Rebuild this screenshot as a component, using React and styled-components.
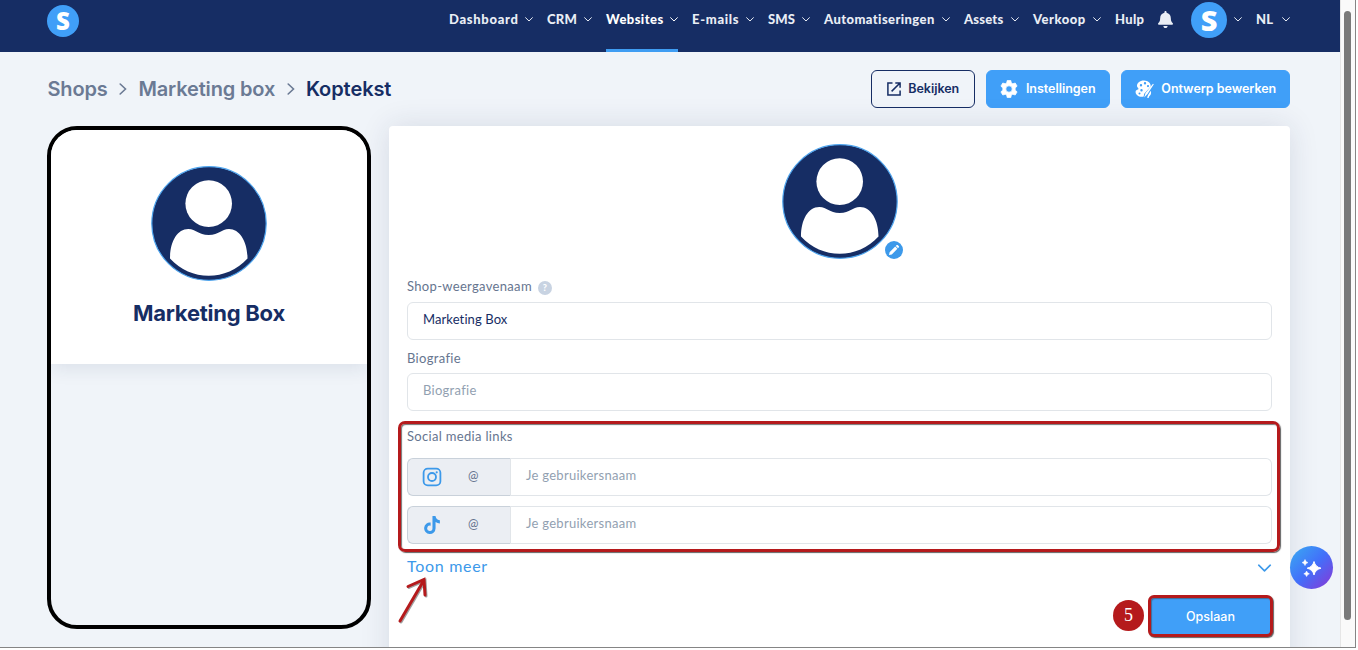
import React from "react";

// COMPONENTS
import styled, { createGlobalStyle } from "styled-components";

// ICONS
import { FaBell, FaTiktok } from "react-icons/fa";

const navItems = [
    { label: "Dashboard", width: 84, tracking: 0.7 },
    { label: "CRM", width: 45, tracking: 0.3 },
    { label: "Websites", width: 72, tracking: 0.45, active: true },
    { label: "E-mails", width: 62, tracking: 0.7 },
    { label: "SMS", width: 42, tracking: 0.1 },
    { label: "Automatiseringen", width: 126, tracking: 0.42 },
    { label: "Assets", width: 55, tracking: 0.2 },
    { label: "Verkoop", width: 68, tracking: 0.5 },
];

const Chevron = ({ size = 8, weight = 1 }) => (
    <svg width={size} height={size / 2 + 1} viewBox="0 0 8 5" fill="none">
        <path d="M.6.7 4 4 7.4.7" stroke="currentColor" strokeWidth={weight} strokeLinecap="round" strokeLinejoin="round" />
    </svg>
);

const CrumbArrow = () => (
    <svg width="8" height="12" viewBox="0 0 8 12" fill="none">
        <path d="M1.2 1 6.5 6 1.2 11" stroke="#6b7a94" strokeWidth="1.6" strokeLinecap="round" />
    </svg>
);

const Person = () => (
    <svg width="116" height="115" viewBox="0 0 116 115">
        <ellipse cx="58" cy="57.5" rx="57.2" ry="56.8" fill="#162d64" stroke="#4fa5ee" strokeWidth="1.2" />
        <circle cx="57.7" cy="37.6" r="23.3" fill="#fff" />
        <path
            d="M19 92.5C19 76 26 63 37.3 63c8 0 9.7 6 20.4 6S70 63 78 63c11 0 18.5 13 18.5 29.5C86 104 72 109.7 57.7 109.7S29.500 104 19 92.500Z"
            fill="#fff"
        />
    </svg>
);

const App = () => {
    return (
        <Page>
            <GlobalStyle />
            <Main>
                <Nav>
                    <Logo>S</Logo>
                    <Menu>
                        {navItems.map((item) => (
                            <NavItem key={item.label} $width={item.width} $tracking={item.tracking} $active={item.active}>
                                {item.label}
                                <Chevron />
                            </NavItem>
                        ))}
                        <NavItem $width={29} $tracking={0.3}>Hulp</NavItem>
                        <Bell><FaBell size={17} /></Bell>
                        <Profile>
                            <Logo $large>S</Logo>
                            <Chevron />
                        </Profile>
                        <NavItem $width={34} $tracking={0.3}>NL <Chevron /></NavItem>
                    </Menu>
                </Nav>

                <Header>
                    <Crumbs>
                        <span>Shops</span>
                        <CrumbArrow />
                        <span>Marketing box</span>
                        <CrumbArrow />
                        <Current>Koptekst</Current>
                    </Crumbs>
                    <Actions>
                        <Button $outline $width={104}>
                            <svg width="14" height="14" viewBox="0 0 14 14" fill="none" stroke="#162d64" strokeWidth="1.5">
                                <path d="M5.500.9H.9v12.200h12.200V8.500M8.300.9h4.800v4.800M13 1 4.600 9.400" />
                            </svg>
                            Bekijken
                        </Button>
                        <Button $width={124}>
                            <svg width="18" height="18" viewBox="0 0 24 24" fill="#fff">
                                <path
                                    fillRule="evenodd"
                                    d="M9.600 0.600h4.800l.7 3.300 2 1.100 3.200-1 2.500 4.200-2.600 2.300v3l2.600 2.300-2.500 4.200-3.200-1-2 1.100-.7 3.300H9.600l-.7-3.300-2-1.100-3.200 1-2.500-4.200 2.600-2.300v-3L1.200 8.200 3.700 4l3.200 1 2-1.100ZM12 7.700a4.300 4.300 0 1 0 0 8.600 4.300 4.300 0 0 0 0-8.600Z"
                                    stroke="#fff"
                                    strokeWidth="1"
                                    strokeLinejoin="round"
                                />
                            </svg>
                            Instellingen
                        </Button>
                        <Button $width={169}>
                            <Palette />
                            Ontwerp bewerken
                        </Button>
                    </Actions>
                </Header>

                <Content>
                    <Phone>
                        <PhoneTop>
                            <Person />
                            <ShopName>Marketing Box</ShopName>
                        </PhoneTop>
                    </Phone>

                    <Panel>
                        <Picture>
                            <Person />
                            <EditBadge>
                                <svg width="12" height="12" viewBox="0 0 12 12" fill="#fff">
                                    <path d="M1 11l.6-2.800 5.600-5.600 2.200 2.200-5.600 5.600ZM7.800 2l.9-.9q.5-.4 1 0l1.200 1.200q.4.5 0 1l-.9.9Z" />
                                </svg>
                            </EditBadge>
                        </Picture>

                        <Label>
                            Shop-weergavenaam <Help>?</Help>
                        </Label>
                        <Field $filled>Marketing Box</Field>

                        <Label $second>Biografie</Label>
                        <Field>Biografie</Field>

                        <Social>
                            <Highlight />
                            <Label $social>Social media links</Label>
                            <SocialRow>
                                <Prefix>
                                    <svg width="20" height="20" viewBox="0 0 20 20" fill="none" stroke="#3c99ea" strokeWidth="1.800">
                                        <rect x="1.600" y="1.600" width="16.800" height="16.800" rx="4.200" />
                                        <circle cx="10" cy="10" r="4" />
                                        <circle cx="14.700" cy="5.300" r="1.100" fill="#3c99ea" stroke="none" />
                                    </svg>
                                    <span>@</span>
                                </Prefix>
                                <Username>Je gebruikersnaam</Username>
                            </SocialRow>
                            <SocialRow>
                                <Prefix>
                                    <FaTiktok size={18} />
                                    <span>@</span>
                                </Prefix>
                                <Username>Je gebruikersnaam</Username>
                            </SocialRow>
                        </Social>

                        <More>
                            Toon meer
                            <MoreChevron>
                                <Chevron size={15} weight={0.95} />
                            </MoreChevron>
                            <Pointer />
                        </More>

                        <Footer>
                            <Step>5</Step>
                            <Save>Opslaan</Save>
                        </Footer>
                    </Panel>
                </Content>

                <Assistant>
                    <svg width="22" height="20" viewBox="0 0 22 20" fill="#fff">
                        <path d="M13 3.500Q14.300 9 20 10.200 14.300 11.500 13 17 11.700 11.500 6.200 10.200 11.700 9 13 3.500Z" stroke="#fff" strokeLinejoin="round" />
                        <path
                            d="M4 1.500Q4.700 4 7 4.600 4.700 5.200 4 7.600 3.300 5.200 1 4.600 3.300 4 4 1.500ZM5.600 13Q6.200 15.200 8.400 15.800 6.200 16.400 5.600 18.600 5 16.400 2.800 15.800 5 15.200 5.600 13Z"
                            stroke="#fff"
                            strokeWidth=".5"
                        />
                    </svg>
                </Assistant>
            </Main>
            <Scrollbar>
                <Thumb />
            </Scrollbar>
        </Page>
    );
};

const Palette = () => (
    <svg width="19" height="19" viewBox="0 0 19 19" fill="#fff">
        <path
            fillRule="evenodd"
            d="M9.300.5C5 .3 1.800 3 2 6.200c.1 1.300 1.800 1.500 1.400 2.800C3 10.300.8 9.600.6 11.800c-.3 3.300 3.700 5.700 7.600 4.900 1.200-.3.300-2.200 1.200-3.200L15.800 6.500C15.800 3 13 .6 9.300.5ZM6 4a1.200 1.200 0 1 1 0 2.400A1.200 1.200 0 0 1 6 4Zm4-1.900a1.200 1.200 0 1 1 0 2.400 1.200 1.200 0 0 1 0-2.400Zm3 2.900a1.100 1.100 0 1 1 0 2.200A1.100 1.100 0 0 1 13 5ZM6.500 9a1.200 1.200 0 1 1 0 2.400 1.200 1.200 0 0 1 0-2.400ZM4.500 12.400a1 1 0 1 1 0 2 1 1 0 0 1 0-2Z"
        />
        <path d="M18 3.800 10.500 13l-1.300 4.500L12.500 14 18.800 4.300ZM13.500 14.200l2.300-3.400c.7 2.200.1 4.400-1.200 5.200-.8.500-.8 1.200-.9 2h-1.400c0-1.400.5-2.300 1.200-3.800Z" />
    </svg>
);

const Pointer = () => (
    <Arrow width="34" height="50" viewBox="0 0 34 50" fill="none">
        <g strokeLinecap="round" strokeWidth="3">
            <path d="M4 46 28 5M12 11.500 28 4.500 29 20" stroke="#777" strokeOpacity=".7" />
            <path d="M3 45 27 4M11 10.500 27 3.500 28 19" stroke="#b51a1c" />
        </g>
    </Arrow>
);

export default App;

const GlobalStyle = createGlobalStyle`
    * {
        box-sizing: border-box;
    }

    body {
        margin: 0;
        overflow: hidden;
        background: #fff;
        font-family: Lato, sans-serif;
    }

    svg {
        display: block;
        flex-shrink: 0;
    }
`;

const Page = styled.div`
    display: flex;
    width: 1356px;
    height: 648px;
    overflow: hidden;
    border-right: 1px solid #858585;
    border-bottom: 1px solid #858585;
`;

const Main = styled.main`
    position: relative;
    width: 1340px;
    height: 647px;
    overflow: hidden;
    background: #f0f4f9;
`;

const Nav = styled.nav`
    display: flex;
    justify-content: space-between;
    height: 52px;
    padding: 0 50px 0 47px;
    background: #162d64;
`;

const Logo = styled.div`
    display: flex;
    align-items: center;
    justify-content: center;
    width: ${(props) => (props.$large ? 36 : 32)}px;
    height: ${(props) => (props.$large ? 36 : 32)}px;
    margin-top: ${(props) => (props.$large ? 2 : 5)}px;
    padding-bottom: ${(props) => (props.$large ? 2 : 0)}px;
    border-radius: 50%;
    background: #409ff8;
    color: #fff;
    font-family: "Open Sans", sans-serif;
    font-size: ${(props) => (props.$large ? 29 : 24)}px;
    font-weight: 800;
    line-height: 1;
`;

const Menu = styled.div`
    display: flex;
    gap: 14px;
`;

const NavItem = styled.div`
    display: flex;
    justify-content: space-between;
    align-items: center;
    width: ${(props) => props.$width}px;
    height: 52px;
    padding-bottom: 12px;
    border-bottom: 3px solid ${(props) => (props.$active ? "#3f9df3" : "transparent")};
    color: ${(props) => (props.$active ? "#fff" : "#e9edf5")};
    font-size: 13px;
    font-weight: 900;
    letter-spacing: ${(props) => props.$tracking}px;
    white-space: nowrap;

    svg {
        margin-top: 2px;
    }
`;

const Bell = styled.div`
    width: 16px;
    margin: 11px 4px 0 -1px;
    color: #e9edf5;
`;

const Profile = styled.div`
    display: flex;
    gap: 7px;
    height: 38px;
    color: #e9edf5;

    > svg {
        margin-top: 17px;
    }
`;

const Header = styled.header`
    display: flex;
    justify-content: space-between;
    align-items: center;
    height: 74px;
    padding: 0 50px 0 47.5px;
`;

const Crumbs = styled.div`
    display: flex;
    align-items: center;
    gap: 11.4px;
    color: #6b7a94;
    font-family: Inter, sans-serif;
    font-size: 20px;
    font-weight: 600;
    letter-spacing: -0.15px;
`;

const Current = styled.span`
    color: #162d64;
    letter-spacing: -0.08px;
`;

const Actions = styled.div`
    display: flex;
    gap: 11px;
`;

const Button = styled.div`
    display: flex;
    align-items: center;
    justify-content: center;
    gap: 7.5px;
    width: ${(props) => props.$width}px;
    height: 38px;
    padding-bottom: 1px;
    border: 1px solid ${(props) => (props.$outline ? "#162d64" : "#409ff8")};
    border-radius: 6px;
    background: ${(props) => (props.$outline ? "transparent" : "#409ff8")};
    color: ${(props) => (props.$outline ? "#162d64" : "#fff")};
    font-family: Inter, sans-serif;
    font-size: 12.5px;
    font-weight: 600;
    letter-spacing: -0.03px;
    white-space: nowrap;

    svg {
        margin-top: 1px;
    }
`;

const Content = styled.div`
    display: flex;
    align-items: flex-start;
    gap: 18px;
    padding-left: 47px;
`;

const Phone = styled.div`
    width: 324px;
    height: 503px;
    overflow: hidden;
    border: 4px solid #000;
    border-radius: 30px;
`;

const PhoneTop = styled.div`
    display: flex;
    flex-direction: column;
    align-items: center;
    height: 234px;
    padding-top: 36px;
    background: #fff;
    box-shadow: 0 4px 18px rgba(30, 45, 90, 0.1);
`;

const ShopName = styled.div`
    margin-top: 18px;
    color: #162d64;
    font-family: Inter, sans-serif;
    font-size: 22px;
    font-weight: 700;
    letter-spacing: -0.25px;
    line-height: 28px;
`;

const Panel = styled.section`
    width: 901px;
    height: 560px;
    padding: 18px;
    border-radius: 4px;
    background: #fff;
    box-shadow: 0 0 30px rgba(30, 45, 80, 0.12);
`;

const Picture = styled.div`
    position: relative;
    width: 116px;
    margin: 0 auto;
`;

const EditBadge = styled.div`
    position: absolute;
    right: -5px;
    bottom: 0;
    display: flex;
    align-items: center;
    justify-content: center;
    width: 18px;
    height: 18px;
    border-radius: 50%;
    background: #3c99ea;
`;

const Label = styled.div`
    display: flex;
    align-items: center;
    gap: 6px;
    height: 18px;
    margin: ${(props) => (props.$social ? "0 0 13px" : props.$second ? "9px 0 6px" : "18px 0 7px")};
    color: #66758f;
    font-size: 13px;
    letter-spacing: 0.32px;
`;

const Help = styled.span`
    display: flex;
    align-items: center;
    justify-content: center;
    width: 14px;
    height: 14px;
    margin-top: 3px;
    border-radius: 50%;
    background: #c8d3e2;
    color: #fff;
    font-size: 9px;
    font-weight: 900;
    letter-spacing: 0;
`;

const Field = styled.div`
    height: 38px;
    padding: 0 15px;
    border: 1px solid #e1e5e9;
    border-radius: 6px;
    color: ${(props) => (props.$filled ? "#162d64" : "#929fb1")};
    font-size: 13px;
    letter-spacing: ${(props) => (props.$filled ? 0.1 : 0.28)}px;
    line-height: 33px;
`;

const Social = styled.div`
    position: relative;
    margin-top: 16px;
`;

const Highlight = styled.div`
    position: absolute;
    top: -6px;
    left: -9px;
    width: 882px;
    height: 131px;
    border: 3px solid #b51a1c;
    border-radius: 7px;
    box-shadow: 1px 1px 1px rgba(60, 60, 60, 0.8), inset 1px 1px 1px rgba(60, 60, 60, 0.7);
`;

const SocialRow = styled.div`
    display: flex;
    height: 38px;
    margin-bottom: 10px;
`;

const Prefix = styled.div`
    display: flex;
    align-items: center;
    gap: 26px;
    width: 104px;
    padding-left: 14px;
    border: 1px solid #c9d1da;
    border-right-color: #e1e5e9;
    border-radius: 6px 0 0 6px;
    background: #ebeef3;
    color: #3c99ea;
    font-size: 12.5px;

    svg {
        width: 20px;
    }

    span {
        padding-bottom: 3px;
        color: #66758f;
    }
`;

const Username = styled(Field)`
    flex: 1;
    border-left: 0;
    border-radius: 0 6px 6px 0;
`;

const More = styled.div`
    position: relative;
    display: flex;
    align-items: center;
    justify-content: space-between;
    height: 20px;
    margin-top: 11px;
    color: #3c99ea;
    font-size: 16px;
    letter-spacing: 0.7px;
`;

const MoreChevron = styled.span`
    padding-top: 6px;
`;

const Arrow = styled.svg`
    position: absolute;
    top: 21px;
    left: -10px;
`;

const Footer = styled.div`
    display: flex;
    align-items: center;
    justify-content: flex-end;
    gap: 4px;
    margin-top: 20px;
    margin-right: -1px;
`;

const Step = styled.div`
    width: 31px;
    height: 31px;
    margin-bottom: 1px;
    border-radius: 50%;
    background: #b51a1c;
    color: #fff;
    font-family: "Liberation Serif", serif;
    font-size: 18px;
    line-height: 31px;
    text-align: center;
`;

const Save = styled.div`
    width: 125px;
    height: 42px;
    border: 3px solid #b51a1c;
    border-radius: 6px;
    background: #409ff8;
    box-shadow: 1px 1px 1px rgba(60, 60, 60, 0.8), inset 1px 1px 1px rgba(60, 60, 60, 0.5);
    color: #fff;
    font-family: Inter, sans-serif;
    font-size: 12.5px;
    font-weight: 500;
    line-height: 37px;
    text-align: center;
`;

const Assistant = styled.div`
    position: absolute;
    left: 1290px;
    top: 546px;
    display: flex;
    align-items: center;
    justify-content: center;
    width: 43px;
    height: 43px;
    border-radius: 50%;
    background: linear-gradient(135deg, #3ba0f3 10%, #4270fa 50%, #7c41dc 90%);
`;

const Scrollbar = styled.div`
    width: 15px;
    padding: 11px 4px 0 3px;
    border-left: 1px solid #e6e6e6;
    background: #fafafa;
`;

const Thumb = styled.div`
    width: 7px;
    height: 609px;
    border-radius: 4px;
    background: #7a7a7a;
`;
